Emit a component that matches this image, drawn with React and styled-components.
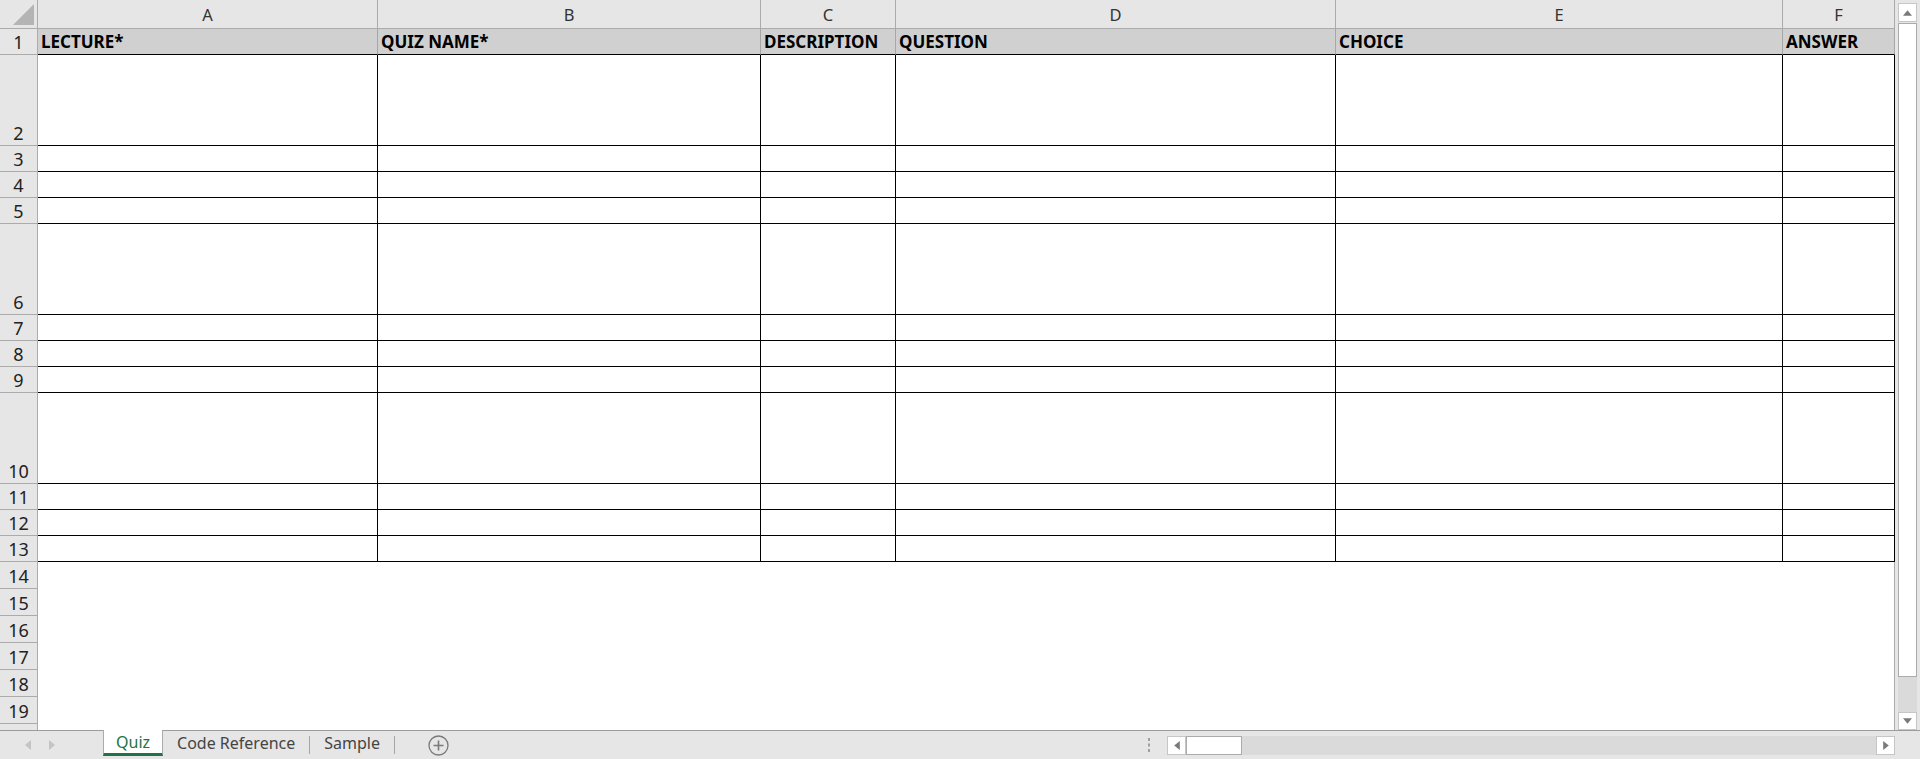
import React from "react"
import styled, { createGlobalStyle } from "styled-components"

const GlobalStyle = createGlobalStyle`
  html, body {
    margin: 0;
    padding: 0;
    background: #ffffff;
    font-family: "Noto Sans", "Noto Sans CJK KR", sans-serif;
  }
`

const COLS = [
  { key: "A", width: 340, title: "LECTURE*" },
  { key: "B", width: 383, title: "QUIZ NAME*" },
  { key: "C", width: 135, title: "DESCRIPTION" },
  { key: "D", width: 440, title: "QUESTION" },
  { key: "E", width: 447, title: "CHOICE" },
  { key: "F", width: 112, title: "ANSWER" },
]

// data rows 2..13 (row 1 is the header)
const DATA_ROWS = [91, 26, 26, 26, 91, 26, 26, 26, 91, 26, 26, 26]
// row 20 is only a sliver at the bottom, its number is hidden
const EMPTY_ROWS = [14, 15, 16, 17, 18, 19, null]

const Window = styled.div`
  width: 1920px;
  height: 759px;
  display: flex;
  flex-direction: column;
  overflow: hidden;
  background: #e6e6e6;
`

const Main = styled.div`
  height: 730px;
  display: flex;
  flex-shrink: 0;
`

const Sheet = styled.div`
  width: 1895px;
  height: 730px;
  overflow: hidden;
  background: #ffffff;
  display: grid;
  grid-template-columns: 38px ${COLS.map(c => c.width + "px").join(" ")};
  grid-auto-rows: min-content;
`

const Corner = styled.div`
  height: 29px;
  box-sizing: border-box;
  background: #e6e6e6;
  border-right: 1px solid #ababab;
  border-bottom: 1px solid #ababab;
  position: relative;
`

const CornerTriangle = styled.div`
  position: absolute;
  right: 3px;
  bottom: 3px;
  width: 0;
  height: 0;
  border-left: 21px solid transparent;
  border-bottom: 21px solid #b4b4b4;
`

const ColHead = styled.div`
  height: 29px;
  box-sizing: border-box;
  background: #e6e6e6;
  border-right: 1px solid #ababab;
  border-bottom: 1px solid #ababab;
  display: flex;
  align-items: center;
  justify-content: center;
  font-size: 16.5px;
  color: #333333;
  padding-top: 1px;
`

const RowHead = styled.div`
  height: ${p => p.$h}px;
  box-sizing: border-box;
  background: #e6e6e6;
  border-right: 1px solid #ababab;
  border-bottom: 1px solid #ababab;
  display: flex;
  align-items: flex-end;
  justify-content: center;
  font-size: 18px;
  line-height: 24px;
  color: #222222;
  overflow: hidden;
`

const TitleCell = styled.div`
  height: 26px;
  box-sizing: border-box;
  background: #d0d0d0;
  border-right: 1px solid #a6a6a6;
  border-bottom: 1px solid #000000;
  display: flex;
  align-items: flex-end;
  padding-left: 3px;
  font-size: 17px;
  font-weight: 700;
  line-height: 24px;
  color: #000000;
  white-space: nowrap;
  overflow: hidden;
`

const Cell = styled.div`
  height: ${p => p.$h}px;
  box-sizing: border-box;
  background: #ffffff;
  border-right: 1px solid #000000;
  border-bottom: 1px solid #000000;
`

const Blank = styled.div`
  grid-column: span 6;
  height: ${p => p.$h}px;
  box-sizing: border-box;
  border-right: 1px solid #ababab;
  background: #ffffff;
`

const VScroll = styled.div`
  width: 25px;
  height: 730px;
  background: #e6e6e6;
  display: flex;
  flex-direction: column;
  align-items: center;
  padding-top: 3px;
  box-sizing: border-box;
`

const ScrollButton = styled.div`
  width: ${p => p.$w || 19}px;
  height: ${p => p.$h || 19}px;
  box-sizing: border-box;
  background: #ffffff;
  border: 1px solid #c6c6c6;
  display: flex;
  align-items: center;
  justify-content: center;
  flex-shrink: 0;
`

const VThumb = styled.div`
  width: 19px;
  height: 654px;
  box-sizing: border-box;
  background: #ffffff;
  border: 1px solid #ababab;
  margin-top: 1px;
`

const VTrack = styled.div`
  width: 19px;
  flex: 1;
  background: #dadada;
`

const TabBar = styled.div`
  height: 29px;
  box-sizing: border-box;
  border-top: 1px solid #9c9c9c;
  display: flex;
  align-items: stretch;
  background: #e6e6e6;
`

const NavArea = styled.div`
  width: 103px;
  display: flex;
  align-items: center;
  padding-left: 25px;
  gap: 18px;
  box-sizing: border-box;
`

const Tab = styled.div`
  height: 26px;
  box-sizing: border-box;
  padding: 0 ${p => (p.$active ? 12 : 14)}px;
  display: flex;
  align-items: center;
  font-size: 16px;
  color: ${p => (p.$active ? "#217346" : "#444444")};
  background: ${p => (p.$active ? "#ffffff" : "transparent")};
  border-left: ${p => (p.$active ? "1px solid #ababab" : "none")};
  border-right: ${p => (p.$active ? "1px solid #ababab" : "none")};
  border-bottom: ${p => (p.$active ? "3px solid #217346" : "none")};
  margin-top: -1px;
  white-space: nowrap;
`

const TabDivider = styled.div`
  width: 1px;
  height: 18px;
  background: #a6a6a6;
  align-self: center;
`

const AddSheet = styled.div`
  margin-left: 33px;
  display: flex;
  align-items: center;
`

const Spacer = styled.div`
  flex: 1;
`

const Grip = styled.div`
  width: 16px;
  display: flex;
  align-items: center;
  justify-content: center;
  margin-right: 10px;
`

const HScroll = styled.div`
  width: 728px;
  height: 19px;
  align-self: center;
  display: flex;
  background: #dadada;
  margin-right: 25px;
  margin-top: 1px;
`

const HThumb = styled.div`
  width: 56px;
  height: 19px;
  box-sizing: border-box;
  background: #ffffff;
  border: 1px solid #ababab;
`

const Arrow = ({ dir }) => {
  const pts = {
    up: "0,5 4,0 8,5",
    down: "0,0 8,0 4,5",
    left: "5,0 5,8 0,4",
    right: "0,0 0,8 5,4",
  }[dir]
  const vertical = dir === "up" || dir === "down"
  return (
    <svg width={vertical ? 9 : 6} height={vertical ? 6 : 9} viewBox={vertical ? "0 0 8 5" : "0 0 5 8"}>
      <polygon points={pts} fill="#7a7a7a" />
    </svg>
  )
}

const NavArrow = ({ dir }) => (
  <svg width="6" height="10" viewBox="0 0 6 10">
    <polygon points={dir === "left" ? "6,0 6,10 0,5" : "0,0 0,10 6,5"} fill="#c4c4c4" />
  </svg>
)

const App = () => {
  return (
    <Window>
      <GlobalStyle />
      <Main>
        <Sheet>
          <Corner>
            <CornerTriangle />
          </Corner>
          {COLS.map(c => (
            <ColHead key={c.key}>{c.key}</ColHead>
          ))}

          <RowHead $h={26}>1</RowHead>
          {COLS.map(c => (
            <TitleCell key={c.key}>{c.title}</TitleCell>
          ))}

          {DATA_ROWS.map((h, i) => (
            <React.Fragment key={i}>
              <RowHead $h={h}>{i + 2}</RowHead>
              {COLS.map(c => (
                <Cell key={c.key} $h={h} />
              ))}
            </React.Fragment>
          ))}

          {EMPTY_ROWS.map((n, i) => (
            <React.Fragment key={i}>
              <RowHead $h={27}>{n}</RowHead>
              <Blank $h={27} />
            </React.Fragment>
          ))}
        </Sheet>
        <VScroll>
          <ScrollButton>
            <Arrow dir="up" />
          </ScrollButton>
          <VThumb />
          <VTrack />
          <ScrollButton $h={18}>
            <Arrow dir="down" />
          </ScrollButton>
        </VScroll>
      </Main>

      <TabBar>
        <NavArea>
          <NavArrow dir="left" />
          <NavArrow dir="right" />
        </NavArea>
        <Tab $active>Quiz</Tab>
        <Tab>Code Reference</Tab>
        <TabDivider />
        <Tab>Sample</Tab>
        <TabDivider />
        <AddSheet>
          <svg width="21" height="21" viewBox="0 0 21 21">
            <circle cx="10.5" cy="10.5" r="9.5" fill="none" stroke="#7a7a7a" strokeWidth="1.3" />
            <path d="M10.5 5.5v10M5.5 10.5h10" stroke="#7a7a7a" strokeWidth="1.6" />
          </svg>
        </AddSheet>
        <Spacer />
        <Grip>
          <svg width="3" height="14" viewBox="0 0 3 14">
            <rect x="0" y="0" width="2" height="3" fill="#a0a0a0" />
            <rect x="0" y="5.5" width="2" height="3" fill="#a0a0a0" />
            <rect x="0" y="11" width="2" height="3" fill="#a0a0a0" />
          </svg>
        </Grip>
        <HScroll>
          <ScrollButton $w={19}>
            <Arrow dir="left" />
          </ScrollButton>
          <HThumb />
          <Spacer />
          <ScrollButton $w={19}>
            <Arrow dir="right" />
          </ScrollButton>
        </HScroll>
      </TabBar>
    </Window>
  )
}

export default App
